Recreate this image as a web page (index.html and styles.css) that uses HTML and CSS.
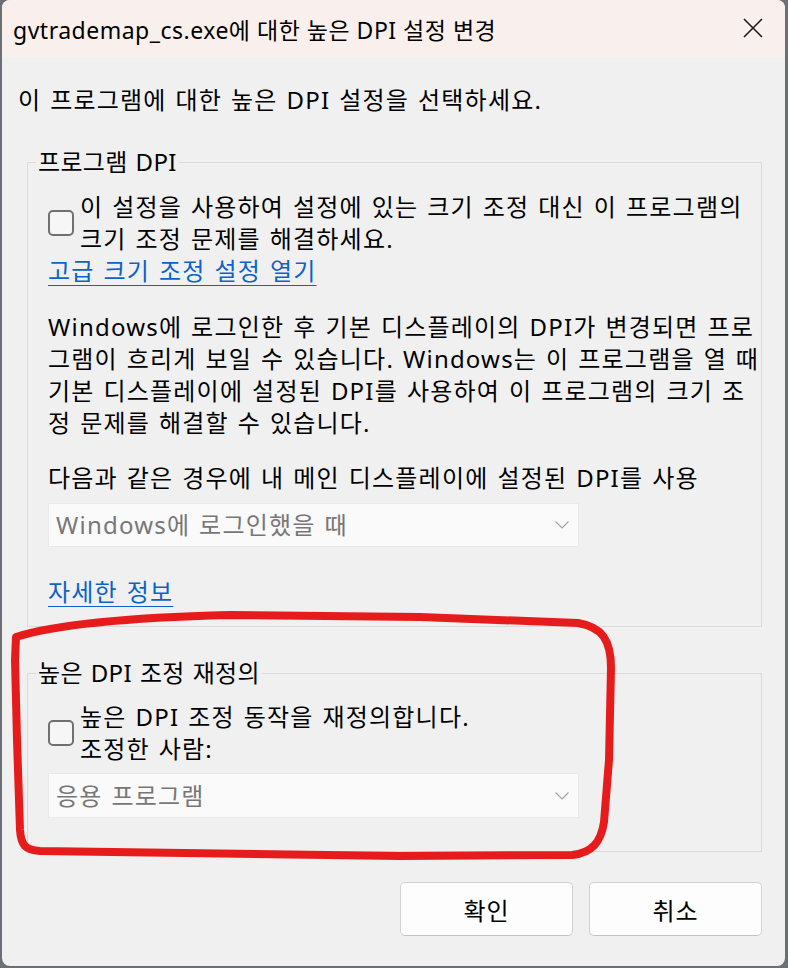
FILE: index.html
```html
<!DOCTYPE html>
<html lang="ko">
<head>
  <meta charset="UTF-8">
  <title>높은 DPI 설정 변경</title>
  <link rel="stylesheet" href="styles.css">
</head>
<body>

<div class="dialog">
  <div class="titlebar">
    <span class="title">gvtrademap_cs.exe에 대한 높은 DPI 설정 변경</span>
    <svg class="close" width="20" height="20" viewBox="0 0 20 20">
      <path d="M1 1 L19 19 M19 1 L1 19" stroke="#1b1b1b" stroke-width="1.6" fill="none"/>
    </svg>
  </div>

  <div class="content">
    <p class="lead">이 프로그램에 대한 높은 DPI 설정을 선택하세요.</p>

    <fieldset class="group">
      <legend>프로그램 DPI</legend>
      <div class="group-body">
        <label class="check">
          <span class="box"></span>
          <span class="check-text">이 설정을 사용하여 설정에 있는 크기 조정 대신 이 프로그램의<br>크기 조정 문제를 해결하세요.</span>
        </label>
        <a class="link">고급 크기 조정 설정 열기</a>

        <p class="para">Windows에 로그인한 후 기본 디스플레이의 DPI가 변경되면 프로<br>그램이 흐리게 보일 수 있습니다. Windows는 이 프로그램을 열 때<br>기본 디스플레이에 설정된 DPI를 사용하여 이 프로그램의 크기 조<br>정 문제를 해결할 수 있습니다.</p>

        <p class="field-label">다음과 같은 경우에 내 메인 디스플레이에 설정된 DPI를 사용</p>
        <div class="combo">
          <span>Windows에 로그인했을 때</span>
          <svg width="14" height="8" viewBox="0 0 14 8"><path d="M0.5 0.5 L7 7 L13.5 0.5" stroke="#a3a3a3" stroke-width="1.2" fill="none"/></svg>
        </div>

        <a class="link more">자세한 정보</a>
      </div>
    </fieldset>

    <fieldset class="group second">
      <legend>높은 DPI 조정 재정의</legend>
      <div class="group-body">
        <label class="check">
          <span class="box"></span>
          <span class="check-text">높은 DPI 조정 동작을 재정의합니다.<br>조정한 사람:</span>
        </label>
        <div class="combo combo-tight">
          <span>응용 프로그램</span>
          <svg width="14" height="8" viewBox="0 0 14 8"><path d="M0.5 0.5 L7 7 L13.5 0.5" stroke="#a3a3a3" stroke-width="1.2" fill="none"/></svg>
        </div>
      </div>
    </fieldset>

    <div class="buttons">
      <button>확인</button>
      <button>취소</button>
    </div>
  </div>
</div>

<!-- 빨간 표시 (스크린샷 위에 그린 손그림) -->
<svg class="scribble" width="788" height="968" viewBox="0 0 788 968">
  <path d="M16 637 C60 623 150 617 230 615 L420 617 L578 623 C602 627 611 640 611 668 L609 760 L604 822 C601 842 592 853 572 855 L400 856 L40 851 C25 850 21 845 20 830 L17 740 L15 660 Z"
        stroke="#e61c1c" stroke-width="8" fill="none" stroke-linejoin="round"/>
</svg>

</body>
</html>
```

FILE: styles.css
```css
body {
  margin: 0;
  background: #6c7075;
  font-family: "Noto Sans", "Noto Sans CJK KR", sans-serif;
  color: #000;
}

.dialog {
  margin-left: 2px;
  width: 783px;
  height: 966px;
  background: #f0f0f0;
  border-radius: 8px;
  overflow: hidden;
}

.titlebar {
  height: 57px;
  background: #f9f0ed;
  display: flex;
  align-items: center;
  justify-content: space-between;
  padding: 0 22px 0 11px;
  box-sizing: border-box;
}

.title {
  font-size: 23px;
  letter-spacing: 0.5px;
  white-space: nowrap;
}

.close {
  margin-top: -1px;
}

.content {
  padding: 27px 23px 0 16px;
  font-size: 24px;
  line-height: 32px;
  letter-spacing: 1.2px;
  word-spacing: 1.5px;
  white-space: nowrap;
}

.lead {
  margin: 0 0 30px;
}

.group {
  margin: 0 0 0 9px;
  padding: 0;
  border: 1px solid #dadada;
  min-width: 0;
}

.group legend {
  margin-left: 8px;
  padding: 0 2px;
  letter-spacing: 0.3px;
}

.group-body {
  padding: 13px 20px 18px;
}

.second {
  margin-top: 30px;
}

.second .group-body {
  padding-top: 12px;
  padding-bottom: 33px;
}

.check {
  display: flex;
  align-items: center;
  gap: 6px;
}

.box {
  width: 22px;
  height: 22px;
  border: 2px solid #707070;
  border-radius: 5px;
  background: #f6f6f6;
  flex: none;
}

.link {
  display: inline-block;
  color: #0a63c9;
  text-decoration: underline;
  text-underline-offset: 5px;
  text-decoration-thickness: 1px;
}

.para {
  margin: 24px 0 0;
}

.field-label {
  margin: 23px 0 0;
}

.combo {
  margin-top: 9px;
  width: 531px;
  height: 44px;
  box-sizing: border-box;
  background: #fafafa;
  border: 1px solid #e9e9e9;
  display: flex;
  align-items: center;
  justify-content: space-between;
  padding: 0 9px 0 7px;
  color: #777;
}

.combo-tight {
  margin-top: 8px;
  height: 45px;
}

.more {
  margin-top: 29px;
}

.buttons {
  display: flex;
  justify-content: flex-end;
  gap: 16px;
  margin-top: 30px;
}

button {
  width: 173px;
  height: 54px;
  background: #fdfdfd;
  border: 1px solid #d2d2d2;
  border-bottom-color: #c4c4c4;
  border-radius: 5px;
  font-family: "Noto Sans", "Noto Sans CJK KR", sans-serif;
  font-size: 24px;
  letter-spacing: 1px;
  color: #000;
  padding: 0;
}

.scribble {
  position: absolute;
  left: 0;
  top: 0;
  pointer-events: none;
}
```
